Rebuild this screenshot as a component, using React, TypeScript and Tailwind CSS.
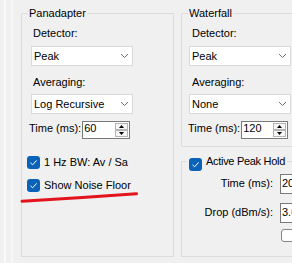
import { FC, ReactNode } from 'react';

const Chevron: FC = () => (
  <svg width="9" height="6" viewBox="0 0 9 6" className="shrink-0">
    <polyline points="1,1 4.5,4.5 8,1" fill="none" stroke="#6d6d6d" strokeWidth="1" />
  </svg>
);

const ComboBox: FC<{ value: string; className?: string }> = ({ value, className = '' }) => (
  <div
    className={`flex h-[20px] w-[102px] items-center justify-between border border-[#dadada] bg-white pl-[2px] pr-[3px] ${className}`}
  >
    <span>{value}</span>
    <Chevron />
  </div>
);

const SpinButton: FC<{ up?: boolean }> = ({ up }) => (
  <div className="flex h-[7px] w-[13px] items-center justify-center border border-[#b4b4b4] bg-[#f6f6f6]">
    <svg width="5" height="3" viewBox="0 0 5 3">
      <polygon points={up ? '2.5,0 5,3 0,3' : '0,0 5,0 2.5,3'} fill="#000" />
    </svg>
  </div>
);

const SpinBox: FC<{ value: string; width: string }> = ({ value, width }) => (
  <div className={`ml-[1px] flex h-[18px] ${width} items-start justify-between border border-[#7a7a7a] bg-white pl-[1px] pr-[1px]`}>
    <span>{value}</span>
    <div className="flex flex-col pt-[1px]">
      <SpinButton up />
      <SpinButton />
    </div>
  </div>
);

const CheckBox: FC<{ checked?: boolean }> = ({ checked }) =>
  checked ? (
    <div className="flex h-[13px] w-[13px] shrink-0 items-center justify-center rounded-[3px] bg-[#0a63b8]">
      <svg width="13" height="13" viewBox="0 0 13 13">
        <polyline points="3.5,6.8 5.6,8.8 9.6,4.4" fill="none" stroke="#fff" strokeWidth="1" />
      </svg>
    </div>
  ) : (
    <div className="h-[13px] w-[13px] shrink-0 rounded-[3px] border border-[#858585] bg-white" />
  );

const CheckRow: FC<{ label: string; className?: string }> = ({ label, className = '' }) => (
  <div className={`flex items-start gap-[4px] ${className}`}>
    <CheckBox checked />
    <span>{label}</span>
  </div>
);

const GroupTitle: FC<{ children: ReactNode }> = ({ children }) => (
  <span className="absolute left-[6px] top-[-7px] bg-[#f0f0f0] px-[1px]">{children}</span>
);

export default function App() {
  return (
    <div className="relative flex h-[263px] w-[292px] items-start overflow-hidden bg-[#f0f0f0] font-['Liberation_Sans',Arial,sans-serif] text-[11px] leading-[13px] text-black">
      <div className="ml-[4px] h-full w-[2px] shrink-0 bg-[#fafafa]" />
      <div className="ml-[5px] h-full w-[2px] shrink-0 bg-[#f7f7f7]" />

      {/* Panadapter */}
      <div className="relative ml-[8px] mt-[13px] h-[244px] w-[153px] shrink-0 border border-[#dcdcdc]">
        <GroupTitle>Panadapter</GroupTitle>
        <div className="flex flex-col items-start pl-[9px]">
          <span className="ml-[2px] mt-[13px]">Detector:</span>
          <ComboBox value="Peak" className="mt-[6px]" />
          <span className="ml-[2px] mt-[10px]">Averaging:</span>
          <ComboBox value="Log Recursive" className="mt-[5px]" />
          <div className="ml-[-2px] mt-[7px] flex items-start">
            <span className="mt-[1px]">Time (ms):</span>
            <SpinBox value="60" width="w-[48px]" />
          </div>
          <CheckRow label="1 Hz BW: Av / Sa" className="ml-[-4px] mt-[17px]" />
          <CheckRow label="Show Noise Floor" className="ml-[-4px] mt-[10px]" />
        </div>
      </div>

      <div className="ml-[7px] flex shrink-0 flex-col">
        {/* Waterfall */}
        <div className="relative mt-[13px] h-[134px] w-[140px] border border-[#dcdcdc]">
          <GroupTitle>Waterfall</GroupTitle>
          <div className="flex flex-col items-start pl-[7px]">
            <span className="ml-[3px] mt-[13px]">Detector:</span>
            <ComboBox value="Peak" className="mt-[6px]" />
            <span className="ml-[3px] mt-[10px]">Averaging:</span>
            <ComboBox value="None" className="mt-[5px]" />
            <div className="ml-[-1px] mt-[7px] flex items-start">
              <span className="mt-[1px]">Time (ms):</span>
              <SpinBox value="120" width="w-[47px]" />
            </div>
          </div>
        </div>

        {/* Active Peak Hold */}
        <div className="relative mt-[14px] h-[96px] w-[140px] border border-[#dcdcdc]">
          <div className="absolute left-[5px] top-[-7px] flex items-start gap-[4px] bg-[#f0f0f0] pl-[2px] pr-[2px]">
            <div className="mt-[3px]">
              <CheckBox checked />
            </div>
            <span className="whitespace-nowrap tracking-[-0.3px]">Active Peak Hold</span>
          </div>
          <div className="flex flex-col">
            <div className="mt-[12px] flex items-start">
              <span className="mt-[3px] w-[91px] text-right">Time (ms):</span>
              <div className="ml-[7px] h-[20px] w-[40px] border border-[#7a7a7a] bg-white pl-[1px] pt-[2px]">20</div>
            </div>
            <div className="mt-[9px] flex items-start">
              <span className="mt-[3px] w-[91px] text-right">Drop (dBm/s):</span>
              <div className="ml-[7px] h-[20px] w-[40px] border border-[#7a7a7a] bg-white pl-[1px] pt-[2px]">3.0</div>
            </div>
            <div className="ml-[99px] mt-[6px]">
              <CheckBox />
            </div>
          </div>
        </div>
      </div>

      {/* red annotation stroke */}
      <svg className="pointer-events-none absolute left-0 top-0" width="292" height="263" viewBox="0 0 292 263">
        <path d="M22 201.2 Q 80 198 136.5 193.8" fill="none" stroke="#e3141d" strokeWidth="3" strokeLinecap="round" />
      </svg>
    </div>
  );
}
